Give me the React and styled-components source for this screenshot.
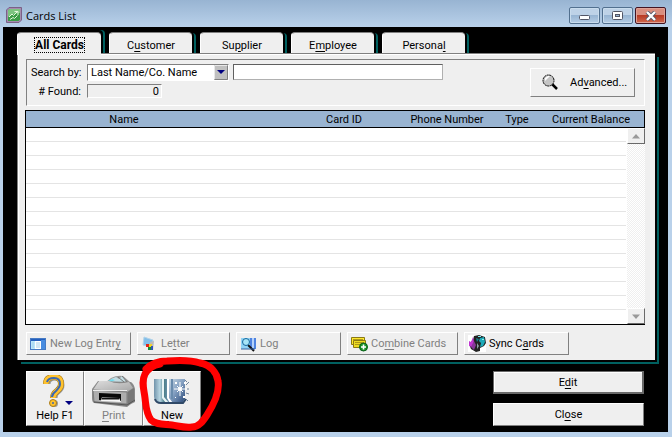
import { Fragment } from 'react';
import styled, { createGlobalStyle, css } from 'styled-components';

const GlobalStyle = createGlobalStyle`
  * {
    box-sizing: border-box;
  }
  html,
  body,
  #root {
    height: 100%;
    margin: 0;
  }
  body,
  button,
  input,
  select {
    font-family: Roboto, 'Liberation Sans', sans-serif;
    font-size: 11px;
    line-height: 13px;
    color: #000;
  }
  u {
    text-underline-offset: 2px;
  }
`;

const raised = css`
  background: #efefef;
  border: 1px solid;
  border-color: #fff #808080 #808080 #fff;
`;

const StyledWindow = styled.div`
  display: flex;
  flex-direction: column;
  min-height: 100vh;
  padding: 0 4px 5px 3px;
  background: #b9d1ea;
`;

const TitleBar = styled.header`
  display: flex;
  align-items: flex-start;
  height: 27px;
  margin: 0 -4px 0 -3px;
  padding: 7px 6px 0;
  background: linear-gradient(#98b4d2, #b9d1ea);
  h1 {
    flex: 1;
    margin: 1px 0 0 4px;
    font: 11px/16px 'Open Sans', sans-serif;
  }
`;

const WindowButtons = styled.div`
  display: flex;
  gap: 2px;
`;

const WindowButton = styled.button`
  display: flex;
  align-items: center;
  justify-content: center;
  width: 31px;
  height: 17px;
  padding: 0;
  border: 1px solid ${({ $danger }) => ($danger ? '#431422' : '#52708f')};
  border-radius: 2px;
  box-shadow: inset 0 0 0 1px ${({ $danger }) => ($danger ? '#dfa297' : '#c9dced')};
  background: ${({ $danger }) =>
    $danger
      ? 'linear-gradient(#d98e7f 45%, #b83a24 50%, #d0694f)'
      : 'linear-gradient(#bed2e7 45%, #98b5d3 50%, #b4cce4)'};
`;

const Desk = styled.main`
  flex: 1;
  display: flex;
  flex-direction: column;
  padding: 5px 9px 6px 14px;
  background: #000;
`;

const TabList = styled.div`
  display: flex;
  align-items: flex-start;
  gap: 8px;
`;

const Tab = styled.button`
  width: 83px;
  height: 21px;
  padding: 4px 0 0;
  border: 0;
  border-top: 1px solid #808080;
  border-left: 1px solid #fff;
  border-radius: 4px 4px 0 0;
  background: #efefef;
  box-shadow: 2px 0 0 #000, 4px 1px 0 #006060;
  ${({ $active }) =>
    $active &&
    css`
      position: relative;
      width: 84px;
      height: 23px;
      margin-bottom: -2px;
      padding: 2px 0 0;
      box-shadow: 2px -2px 0 #000, 4px -2px 0 #006060;
      font-size: 12px;
      font-weight: 700;
      span {
        outline: 1px dotted #000;
      }
    `}
`;

const Panel = styled.section`
  flex: 1;
  display: flex;
  flex-direction: column;
  margin-right: 4px;
  padding: 5px 10px 5px 8px;
  border-top: 1px solid #808080;
  border-left: 1px solid #808080;
  background: #efefef;
  box-shadow: inset 1px 1px 0 #fff, 2px 2px 0 #000, 4px 4px 0 #006060;
`;

const SearchBox = styled.form`
  display: flex;
  justify-content: space-between;
  height: 47px;
  padding: 4px 9px 0 4px;
  border: 1px solid;
  border-color: #808080 #fff #fff #808080;
`;

const Fields = styled.div`
  display: grid;
  grid-template-columns: 52px 142px 210px;
  grid-template-rows: 17px 14px;
  gap: 3px 4px;
  label {
    align-self: center;
    padding-right: 2px;
    text-align: right;
    white-space: nowrap;
  }
`;

const SelectWrap = styled.div`
  position: relative;
  display: flex;
  svg {
    position: absolute;
    top: 1px;
    right: 1px;
    pointer-events: none;
  }
`;

const Select = styled.select`
  appearance: none;
  width: 100%;
  padding: 0 3px;
  border: 1px solid;
  border-color: #808080 #fff #fff #808080;
  border-radius: 0;
  background: #fff;
`;

const TextInput = styled.input`
  min-width: 0;
  height: 16px;
  padding: 0 3px;
  border: 1px solid;
  border-color: #606060 #b0b0b0 #b0b0b0 #606060;
`;

const FoundCount = styled.output`
  width: 75px;
  padding-right: 2px;
  border: 1px solid;
  border-color: #808080 #fff #fff #808080;
  line-height: 13px;
  text-align: right;
`;

const AdvancedButton = styled.button`
  ${raised}
  display: flex;
  align-items: center;
  gap: 11px;
  width: 105px;
  height: 29px;
  margin-top: 4px;
  padding: 0 6px 0 11px;
`;

const ListFrame = styled.div`
  flex: 1;
  display: grid;
  grid-template-columns: 1fr 18px;
  grid-template-rows: 17px 1fr;
  margin: 4px 0 7px -1px;
  border: 1px solid #000;
  border-right: 0;
  background: #fff;
`;

const Table = styled.table`
  grid-area: 1 / 1 / 3 / 3;
  display: block;
  thead,
  tbody {
    display: block;
  }
  tr {
    display: grid;
    grid-template-columns: 1fr 108px 98px 42px 106px;
  }
  thead tr {
    height: 17px;
    background: #99b4d1;
    border-right: 1px solid #000;
    border-bottom: 1px solid #000;
  }
  th {
    padding: 1px 0 0;
    font-weight: 400;
    line-height: 15px;
    text-align: center;
  }
  th:first-child {
    padding-right: 68px;
  }
  tbody tr {
    height: 14px;
    margin-right: 19px;
    border-bottom: 1px solid #e4e4e4;
  }
  td {
    padding: 0;
  }
`;

const ScrollBar = styled.div`
  grid-area: 2 / 2;
  display: flex;
  flex-direction: column;
  justify-content: space-between;
  background: repeating-conic-gradient(#fff 0 25%, #efefef 0 50%) 0 0 / 2px 2px;
`;

const ScrollButton = styled.button`
  display: flex;
  align-items: center;
  justify-content: center;
  height: 16px;
  padding: 0;
  background: #efefef;
  border: 1px solid;
  border-color: #fff #696969 #696969 #fff;
`;

const Actions = styled.div`
  display: flex;
  gap: 6px;
`;

const ActionButton = styled.button`
  ${raised}
  display: flex;
  align-items: center;
  gap: 3px;
  width: ${({ $width }) => $width}px;
  height: 23px;
  padding: 0 3px;
  white-space: nowrap;
  &:disabled {
    color: #808080;
  }
`;

const Footer = styled.footer`
  display: flex;
  justify-content: space-between;
  margin: 11px 15px 0 9px;
`;

const ToolBar = styled.div`
  display: flex;
`;

const ToolButton = styled.button`
  ${raised}
  position: relative;
  display: flex;
  flex-direction: column;
  align-items: center;
  justify-content: space-between;
  width: ${({ $wide }) => ($wide ? 59 : 58)}px;
  height: 55px;
  padding: 3px 0 3px;
  &:disabled {
    color: #808080;
  }
`;

const Marker = styled.svg`
  position: absolute;
  top: -16px;
  left: -7px;
  z-index: 1;
  pointer-events: none;
`;

const FormButtons = styled.div`
  display: flex;
  flex-direction: column;
  justify-content: space-between;
  width: 151px;
`;

const FormButton = styled.button`
  ${raised}
  height: 23px;
  ${({ $default }) =>
    $default &&
    css`
      border-width: 1px 2px 2px 1px;
      border-color: #696969;
      box-shadow: inset 1px 1px 0 #fff;
    `}
`;

const AppIcon = () => (
  <svg width="16" height="16" viewBox="0 0 16 16">
    <path d="M3 .5h12.5V13L13 15.5H.5V3Z" fill="#a58cae" stroke="#7b6187" />
    <path d="M3.5 2h10.500v10.500L12.500 14H2V3.500Z" fill="#3a9c46" />
    <path d="M3.500 2H14v4Q8 6 2 10V3.500Z" fill="#7cc480" />
    <path d="m3 10 3-3 1.500 1.500L11 5M8.500 4.500H12V8M4 12.500l3-2 1.500 1 3-3" fill="none" stroke="#e4f8dd" />
  </svg>
);

const Magnifier = () => (
  <svg width="17" height="17" viewBox="0 0 17 17">
    <path d="m10 10 5 5" stroke="#000" strokeWidth="2.5" />
    <circle cx="6.500" cy="6.500" r="5.500" fill="#c4c4c4" stroke="#000" strokeDasharray="2 .6" />
    <path d="M3 7V4l3-2h2L4 6Z" fill="#fff" />
  </svg>
);

const Arrow = ({ up }) => (
  <svg width="8" height="5" viewBox="0 0 8 5">
    <path d={up ? 'M0 4.5 4 0l4 4.5Z' : 'M0 .5h8L4 5Z'} fill="#999" />
  </svg>
);

const DropArrow = () => (
  <svg width="14" height="15" viewBox="0 0 14 15">
    <path d="M0 0h14v15H0Z" fill="#c0c0c0" />
    <path d="M.5 14.5V.5h13" fill="none" stroke="#e8e8e8" />
    <path d="M.5 14.5h13V.5" fill="none" stroke="#808080" />
    <path d="M3 5h8L7 9Z" fill="#000080" />
  </svg>
);

const LogEntryIcon = () => (
  <svg width="17" height="16" viewBox="0 0 17 16">
    <rect x=".5" y="2.5" width="15" height="11" fill="#fff" stroke="#477bc4" />
    <path d="M1 3h14v2H1Z" fill="#245fbd" />
    <path d="M11 4h4v9h-4Z" fill="#498de1" />
    <path d="M1 5h4v8H1Z" fill="#b9e7fa" />
    <path d="M2 7h2M2 9h2M2 11h2M6 7h4M6 9h4M6 11h4" stroke="#a5d0ea" />
  </svg>
);

const LetterIcon = () => (
  <svg width="17" height="16" viewBox="0 0 17 16">
    <path d="m3 1 9 3-1 8-4-2-5-1Z" fill="#83bfea" stroke="#b3d4e9" />
    <path d="m9 6 4-1-1 9H9Z" fill="#bbb" />
    <path d="M5 8h4v3H5Z" fill="#e02218" />
    <path d="M8 8h3v3H8Z" fill="#f2d329" />
    <path d="M7 11h3v3H7Z" fill="#168c35" />
    <path d="M10 10h2v4h-2Z" fill="#3155b5" />
  </svg>
);

const LogIcon = () => (
  <svg width="17" height="16" viewBox="0 0 17 16">
    <path d="M1 2h10v11H1Z" fill="#91d4f5" />
    <path d="M10 2h6v11h-6Z" fill="#4f83e0" />
    <path d="M12 2h2v10h-2Z" fill="#b4d2fb" />
    <path d="m8 9 6 6" stroke="#111" strokeWidth="2" />
    <circle cx="6" cy="6" r="3.5" fill="#a7e5f6" stroke="#16669d" />
    <path d="M1 13h14" stroke="#3b659e" />
  </svg>
);

const CombineIcon = () => (
  <svg width="17" height="16" viewBox="0 0 17 16">
    <path d="M.5 1.500h13v7H.5Z" fill="#ffe82e" stroke="#8b7a13" />
    <path d="M2.500 4.500h12v7h-12Z" fill="#eedc20" stroke="#8b7a13" />
    <path d="M4 6.500h9M4 8.500h7M2 3.500h10" stroke="#ad981b" />
    <circle cx="12.500" cy="11" r="4" fill="#199327" stroke="#086019" />
    <path d="M12.500 8.500v5M10 11h5" stroke="#fff" strokeWidth="1.6" />
  </svg>
);

const SyncIcon = () => (
  <svg width="18" height="17" viewBox="0 0 18 17">
    <path d="M0 0h18v17H0Z" fill="#fff" />
    <path d="m6 1 5-1 6 2 1 6-2 3-4 2v3l-4 1-5-3-2-5 4-4Z" fill="#222" />
    <path d="m12 3 4-1 1 5-2 4-3 1 1-4-2-2Z" fill="#1daab9" />
    <path d="m5 2 1 5-2 5-3-1V6l2 1Z" fill="#c035d2" />
    <path d="m6 6 2 4-2 5-3-3Z" fill="#873698" />
    <path d="m8 3 3 1-2 3Z" fill="#137f8d" />
    <path d="m9 8 2 3-2 3Z" fill="#8fa3a9" />
    <path d="M14 4.500h2M10 1.500h3" stroke="#7ff0ee" />
  </svg>
);

const HelpIcon = () => (
  <svg width="40" height="33" viewBox="0 0 40 33">
    <path d="M13 9q0-6 7-6 7 0 7 7 0 4-4 7-3 2-3 6" fill="none" stroke="#999" strokeWidth="5" />
    <circle cx="19.500" cy="28.500" r="3.500" fill="#999" />
    <path d="M11 9q0-7 8-7 7 0 7 7 0 4-4 7-4 3-4 7" fill="none" stroke="#a97b18" strokeWidth="6" />
    <path d="M11 9q0-7 8-7 7 0 7 7 0 4-4 7-4 3-4 7" fill="none" stroke="#ffc22e" strokeWidth="5" />
    <path d="M12 7q1-4 7-4 6 0 6 6 0 3-4 7-4 3-4 6" fill="none" stroke="#3a68b2" strokeWidth="2" />
    <circle cx="18" cy="28" r="3.500" fill="#ffc22e" stroke="#a97b18" />
    <circle cx="18" cy="28" r="1" fill="#3a68b2" />
    <path d="M30 26h8l-4 4Z" fill="#000080" />
  </svg>
);

const PrinterIcon = () => (
  <svg width="46" height="33" viewBox="0 0 46 33">
    <defs>
      <linearGradient id="printerLid" x2="1" y2="1">
        <stop offset="0" stopColor="#ddd" />
        <stop offset="1" stopColor="#a4a4a4" />
      </linearGradient>
    </defs>
    <path d="m14 8 6-5q6-3 12-2l7 6-3 4Z" fill="#9c9c9c" />
    <path d="m20 4 5-2 3 2 3-3 4 5-7 3-10-1Z" fill="#c3dde3" />
    <path d="m17 6 4-2 3 1-4 2Z" fill="#75dced" />
    <path d="m27 2 6 5M31 1l6 7" stroke="#747474" />
    <path d="m7 6 33 1q3 2 4 7v13l-4 2-4 3L3 28q-2-1-2-5v-9Z" fill="#888" />
    <path d="m8 6 10 0q8 4 20 1l4 6-6 4-34-2Z" fill="url(#printerLid)" />
    <path d="m2 15 34 2v12L3 27Z" fill="#adadad" stroke="#7b7b7b" />
    <path d="M2 15.500h34" stroke="#ececec" />
    <path d="M37 17l6-4v12l-6 5Z" fill="#777" />
    <path d="m8 18 22 1v7L8 25Z" fill="#080808" />
    <path d="m11 22 17 1 2 4-20-1Z" fill="#f7f7f7" />
    <path d="M11 22.500h17v2H11Z" fill="#111" />
    <path d="m3 27 33 3 8-5" fill="none" stroke="#555" />
  </svg>
);

const NewIcon = () => (
  <svg width="38" height="32" viewBox="0 0 38 32">
    <defs>
      <linearGradient id="cardFace" x2="1" y2="1">
        <stop offset="0" stopColor="#d0dfe8" />
        <stop offset=".5" stopColor="#839fc1" />
        <stop offset="1" stopColor="#294878" />
      </linearGradient>
      <linearGradient id="cardSpine">
        <stop offset="0" stopColor="#7193aa" />
        <stop offset=".35" stopColor="#b8d7e3" />
        <stop offset=".6" stopColor="#4d7f8b" />
        <stop offset="1" stopColor="#87a5c9" />
      </linearGradient>
    </defs>
    <path d="M1 4h13l4 24H7q-6-1-6-7Z" fill="url(#cardSpine)" />
    <path d="M9 4h2v18l5 6h-3l-4-5Z" fill="#e9f5f6" />
    <path d="M14 4h18v20l-3 4H17l-3-5Z" fill="url(#cardFace)" />
    <path d="M14 4h2v19l4 5h-3l-3-5Z" fill="#fff" />
    <path d="M18 4h2v20h-2Z" fill="#698bad" />
    <path d="M2 24q1 4 6 4h22l3-4" fill="none" stroke="#304967" strokeWidth="2" />
    <path d="M27 7v14M21 14h13M24 11l6 6M30 11l-6 6" stroke="#fff" />
    <circle cx="27" cy="14" r="2" fill="#fff" />
    <path d="M22 7h2v2h-2ZM30 21h2v2h-2ZM22 22h1v1h-1ZM31 7h2v2h-2Z" fill="#fff" />
    <path d="m33 10 3-3M33 18l3 1M32 5l2 2M33 24l2 2M34 14h2" stroke="#71839a" />
  </svg>
);

const tabs = [
  { id: 'all', label: 'All Cards' },
  { id: 'customer', label: <>C<u>u</u>stomer</> },
  { id: 'supplier', label: <>Su<u>p</u>plier</> },
  { id: 'employee', label: <>E<u>m</u>ployee</> },
  { id: 'personal', label: <>Persona<u>l</u></> },
];

const columns = ['Name', 'Card ID', 'Phone Number', 'Type', 'Current Balance'];

const actions = [
  { id: 'entry', icon: <LogEntryIcon />, label: <>New Log Entr<u>y</u></>, width: 105 },
  { id: 'letter', icon: <LetterIcon />, label: <>Le<u>t</u>ter</>, width: 93 },
  { id: 'log', icon: <LogIcon />, label: 'Log', width: 105 },
  { id: 'combine', icon: <CombineIcon />, label: <>Co<u>m</u>bine Cards</>, width: 111 },
  { id: 'sync', icon: <SyncIcon />, label: <>Sync C<u>a</u>rds</>, width: 105, enabled: true },
];

const CardTable = () => (
  <Table>
    <thead>
      <tr>
        {columns.map((column) => (
          <th key={column}>{column}</th>
        ))}
      </tr>
    </thead>
    <tbody>
      {Array.from({ length: 13 }, (_, row) => (
        <tr key={row}>
          {columns.map((column) => (
            <td key={column} />
          ))}
        </tr>
      ))}
    </tbody>
  </Table>
);

const App = () => (
  <Fragment>
    <GlobalStyle />
    <StyledWindow>
      <TitleBar>
        <AppIcon />
        <h1>Cards List</h1>
        <WindowButtons>
          <WindowButton aria-label="Minimize">
            <svg width="11" height="11" viewBox="0 0 11 11">
              <rect x=".5" y="5.5" width="10" height="4" rx="1" fill="#fff" stroke="#535666" />
            </svg>
          </WindowButton>
          <WindowButton aria-label="Maximize">
            <svg width="11" height="9" viewBox="0 0 11 9">
              <rect x=".5" y=".5" width="10" height="8" rx="1" fill="#fff" stroke="#535666" />
              <rect x="3.5" y="3.5" width="4" height="2" fill="#98b5d3" stroke="#535666" />
            </svg>
          </WindowButton>
          <WindowButton $danger aria-label="Close window">
            <svg width="12" height="10" viewBox="0 0 12 10">
              <path d="m2 1 8 8M10 1 2 9" stroke="#535666" strokeWidth="4" />
              <path d="m2 1 8 8M10 1 2 9" stroke="#fff" strokeWidth="2.4" />
            </svg>
          </WindowButton>
        </WindowButtons>
      </TitleBar>
      <Desk>
        <TabList role="tablist">
          {tabs.map(({ id, label }, index) => (
            <Tab key={id} role="tab" aria-selected={index === 0} $active={index === 0}>
              <span>{label}</span>
            </Tab>
          ))}
        </TabList>
        <Panel>
          <SearchBox>
            <Fields>
              <label htmlFor="search-by">Search by:</label>
              <SelectWrap>
                <Select id="search-by">
                  <option>Last Name/Co. Name</option>
                </Select>
                <DropArrow />
              </SelectWrap>
              <TextInput type="text" aria-label="Search text" />
              <label htmlFor="found"># Found:</label>
              <FoundCount id="found">0</FoundCount>
            </Fields>
            <AdvancedButton type="button">
              <Magnifier />
              <span>
                Ad<u>v</u>anced...
              </span>
            </AdvancedButton>
          </SearchBox>
          <ListFrame>
            <CardTable />
            <ScrollBar>
              <ScrollButton aria-label="Scroll up">
                <Arrow up />
              </ScrollButton>
              <ScrollButton aria-label="Scroll down">
                <Arrow />
              </ScrollButton>
            </ScrollBar>
          </ListFrame>
          <Actions>
            {actions.map(({ id, icon, label, width, enabled }) => (
              <ActionButton key={id} $width={width} disabled={!enabled}>
                {icon}
                <span>{label}</span>
              </ActionButton>
            ))}
          </Actions>
        </Panel>
        <Footer>
          <ToolBar>
            <ToolButton>
              <HelpIcon />
              <span>Help F1</span>
            </ToolButton>
            <ToolButton $wide disabled>
              <PrinterIcon />
              <span>
                <u>P</u>rint
              </span>
            </ToolButton>
            <ToolButton>
              <NewIcon />
              <span>
                <u>N</u>ew
              </span>
              <Marker width="90" height="80" viewBox="0 0 90 80">
                <path
                  d="M9 13C15 7 22 5 30 5c12-1 24-1 33 2 11 2 17 10 18 18 2 11-4 23-11 34-4 6-8 12-15 12-8 1-13-1-20-2-8-1-16 0-21-5-5-7-5-14-6-22-1-9-4-16 0-24 4-7 9-9 15-10"
                  fill="none"
                  stroke="#f00"
                  strokeWidth="7"
                  strokeLinecap="round"
                />
              </Marker>
            </ToolButton>
          </ToolBar>
          <FormButtons>
            <FormButton $default>
              E<u>d</u>it
            </FormButton>
            <FormButton>
              Cl<u>o</u>se
            </FormButton>
          </FormButtons>
        </Footer>
      </Desk>
    </StyledWindow>
  </Fragment>
);

export default App;
